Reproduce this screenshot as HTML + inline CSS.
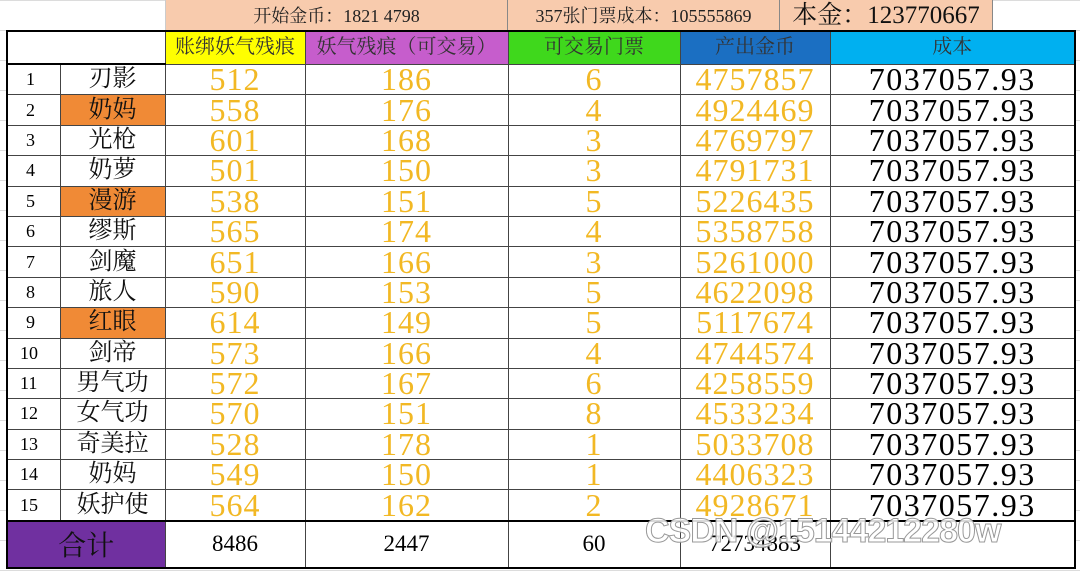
<!DOCTYPE html>
<html><head><meta charset="utf-8"><style>
body{margin:0;width:1080px;height:575px;background:#fff;overflow:hidden;position:relative;font-family:"Liberation Serif","Noto Serif CJK SC",serif;
background-image:linear-gradient(#dcdcdc 1px,transparent 1px);background-size:100% 30px;}
.top{position:absolute;top:0;height:30px;background:#f8cbad;border-right:1px solid #888;box-sizing:border-box;text-align:center;line-height:32px;font-size:18px;color:#222;font-family:"Liberation Serif","Noto Serif CJK SC",serif}
table{position:absolute;left:6px;top:30px;border-collapse:collapse;table-layout:fixed;background:#fff}
td{border:1px solid #444;padding:0;text-align:center;overflow:hidden;white-space:nowrap}
tr.h td{height:31px;font-size:20px;line-height:31px;font-family:"Liberation Serif","Noto Serif CJK SC",serif;color:#333}
tr.d td{height:29.4px;line-height:29px}
.n{font-size:18px;text-align:left;padding-left:18px}
.nm{font-size:24px;color:#111}
.o{background:#f08a36}
.y{color:#f2b824;font-size:32px;letter-spacing:1px}
.c{font-size:32px;color:#000;letter-spacing:1.5px}
tr.t td{height:45px;font-size:23px;border-top:2px solid #000;border-bottom:2px solid #000}
</style></head><body>
<div class="top" style="left:165px;width:343px;border-left:1px solid #ccc">开始金币：1821 4798</div>
<div class="top" style="left:508px;width:272px">357张门票成本：105555869</div>
<div class="top" style="left:780px;width:213px;font-size:25px;color:#111">本金：123770667</div>
<table style="border:2px solid #000">
<colgroup><col style="width:53px"><col style="width:105px"><col style="width:140px"><col style="width:203px"><col style="width:172px"><col style="width:150px"><col style="width:245px"></colgroup>
<tr class="h"><td colspan="2" style="border-bottom:2px solid #000"></td><td style="background:#ffff00">账绑妖气残痕</td><td style="background:#c65dcc">妖气残痕（可交易）</td><td style="background:#3fd81c">可交易门票</td><td style="background:#1b6fc2">产出金币</td><td style="background:#00b0f0">成本</td></tr>
<tr class="d"><td class="n">1</td><td class="nm">刃影</td><td class="y">512</td><td class="y">186</td><td class="y">6</td><td class="y">4757857</td><td class="c">7037057.93</td></tr>
<tr class="d"><td class="n">2</td><td class="nm o">奶妈</td><td class="y">558</td><td class="y">176</td><td class="y">4</td><td class="y">4924469</td><td class="c">7037057.93</td></tr>
<tr class="d"><td class="n">3</td><td class="nm">光枪</td><td class="y">601</td><td class="y">168</td><td class="y">3</td><td class="y">4769797</td><td class="c">7037057.93</td></tr>
<tr class="d"><td class="n">4</td><td class="nm">奶萝</td><td class="y">501</td><td class="y">150</td><td class="y">3</td><td class="y">4791731</td><td class="c">7037057.93</td></tr>
<tr class="d"><td class="n">5</td><td class="nm o">漫游</td><td class="y">538</td><td class="y">151</td><td class="y">5</td><td class="y">5226435</td><td class="c">7037057.93</td></tr>
<tr class="d"><td class="n">6</td><td class="nm">缪斯</td><td class="y">565</td><td class="y">174</td><td class="y">4</td><td class="y">5358758</td><td class="c">7037057.93</td></tr>
<tr class="d"><td class="n">7</td><td class="nm">剑魔</td><td class="y">651</td><td class="y">166</td><td class="y">3</td><td class="y">5261000</td><td class="c">7037057.93</td></tr>
<tr class="d"><td class="n">8</td><td class="nm">旅人</td><td class="y">590</td><td class="y">153</td><td class="y">5</td><td class="y">4622098</td><td class="c">7037057.93</td></tr>
<tr class="d"><td class="n">9</td><td class="nm o">红眼</td><td class="y">614</td><td class="y">149</td><td class="y">5</td><td class="y">5117674</td><td class="c">7037057.93</td></tr>
<tr class="d"><td class="n" style="padding-left:12px">10</td><td class="nm">剑帝</td><td class="y">573</td><td class="y">166</td><td class="y">4</td><td class="y">4744574</td><td class="c">7037057.93</td></tr>
<tr class="d"><td class="n" style="padding-left:12px">11</td><td class="nm">男气功</td><td class="y">572</td><td class="y">167</td><td class="y">6</td><td class="y">4258559</td><td class="c">7037057.93</td></tr>
<tr class="d"><td class="n" style="padding-left:12px">12</td><td class="nm">女气功</td><td class="y">570</td><td class="y">151</td><td class="y">8</td><td class="y">4533234</td><td class="c">7037057.93</td></tr>
<tr class="d"><td class="n" style="padding-left:12px">13</td><td class="nm">奇美拉</td><td class="y">528</td><td class="y">178</td><td class="y">1</td><td class="y">5033708</td><td class="c">7037057.93</td></tr>
<tr class="d"><td class="n" style="padding-left:12px">14</td><td class="nm">奶妈</td><td class="y">549</td><td class="y">150</td><td class="y">1</td><td class="y">4406323</td><td class="c">7037057.93</td></tr>
<tr class="d"><td class="n" style="padding-left:12px">15</td><td class="nm">妖护使</td><td class="y">564</td><td class="y">162</td><td class="y">2</td><td class="y">4928671</td><td class="c">7037057.93</td></tr>
<tr class="t"><td colspan="2" style="background:#7030a0;font-size:28px;color:#111">合计</td><td>8486</td><td>2447</td><td>60</td><td>72734883</td><td></td></tr>
</table>
<div style="position:absolute;left:645px;top:512px;font:bold 34px 'Liberation Sans',sans-serif;color:rgba(255,255,255,0.85);-webkit-text-stroke:1px #999;letter-spacing:-1px">CSDN @15144212280w</div>
</body></html>
